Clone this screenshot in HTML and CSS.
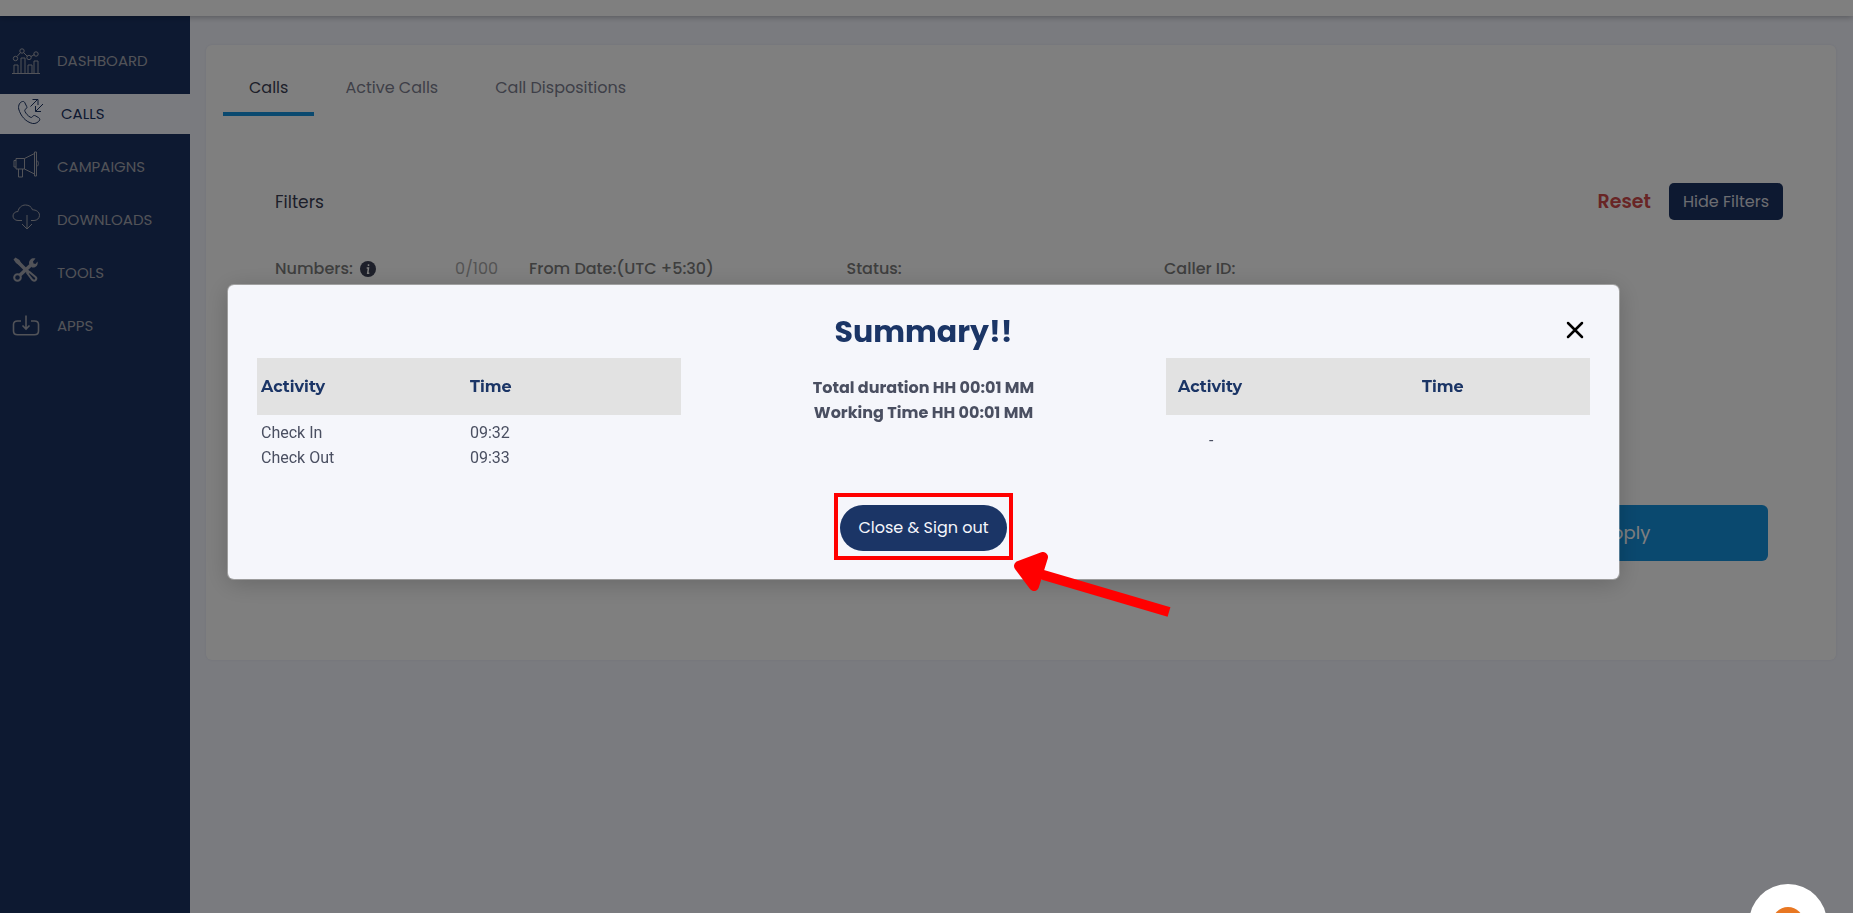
FILE: index.html
```html
<!DOCTYPE html>
<html lang="en">
<head>
    <meta charset="UTF-8">
    <meta name="viewport" content="width=device-width, initial-scale=1.0">
    <title>Calls</title>
    <link rel="stylesheet" href="styles.css">
</head>
<body>
    <header class="topbar"></header>
    <div class="layout">
        <nav class="sidebar">
            <a href="#" class="nav-item">
                <svg class="nav-icon" viewBox="0 0 28 28"><path d="M0 26.500h28M2 26v-8h4v8M9 26V11h4v15M16 26v-8h4v8M22 26V14h4v12M5 9.500l3.500-4M11.500 5.500l4 4M19 9.500l3.500-2"/><circle cx="3.500" cy="11.500" r="2.200"/><circle cx="10" cy="4" r="2.200"/><circle cx="17" cy="10.500" r="2.200"/><circle cx="24" cy="7" r="2.200"/></svg>
                <span>DASHBOARD</span>
            </a>
            <a href="#" class="nav-item active">
                <svg class="nav-icon raised" viewBox="0 0 28 28"><path d="M6.500 4.500C4 5 2 8 2.700 12c2 7 7 13 14 14.500 3 .500 6-1.500 7-3.500.300-1-.200-1.800-1-2.300l-3.500-2c-1-.500-2-.200-2.500.700-.700 1.200-1.500 1.300-2.700.600-2.200-1.300-4-3.300-5-5.500-.500-1.200-.300-1.900.700-2.500 1.200-.700 1.500-1.500 1-2.500l-2-4c-.500-.900-1.200-1.200-2.200-1z"/><path d="M14.500 9.500l7-7M16.500 2.500h5.500v5.500M27 7l-7.500 7.500M19.500 9v5.500H25"/></svg>
                <span>CALLS</span>
            </a>
            <a href="#" class="nav-item">
                <svg class="nav-icon raised" viewBox="0 0 28 28"><path d="M4 8.500h8.500V19H4zM4 10.500H2v6.500h2M12.500 8.500l10-5v20.500l-10-5M22.500 2h2v24h-2zM24.500 10.500c2.500.500 2.500 5.500 0 6M6.500 19v8h4v-8"/></svg>
                <span>CAMPAIGNS</span>
            </a>
            <a href="#" class="nav-item">
                <svg class="nav-icon raised" viewBox="0 0 28 28"><path d="M10 17.500H6c-3 0-5-2-5-4.500S3 8.500 6 8.500C6.500 5 9.500 2 13.500 2c3.500 0 6 1.800 7 4.800 3.500 0 7 2 7 5.500 0 3-2.500 5.200-5.500 5.200h-3M15 12v14M10 21l5 5 5-5"/></svg>
                <span>DOWNLOADS</span>
            </a>
            <a href="#" class="nav-item">
                <svg class="nav-icon raised" viewBox="0 0 28 28"><path class="thick" d="M5 5l14 14M7 20L20 8"/><path class="solid" d="M1.500 3.500l2-2 4 2.500 2 4-1.500 1.500-4-2.500zM17 7.500c0-4 3-6 6.500-5L21 5.500l.500 2 2 .500 2-2.500c1 4-2 6.500-5.500 6z"/><circle class="ring" cx="5.500" cy="21.500" r="3.300"/><path class="ring" d="M15.500 17.500l2-1.500 6 5c2 2-.500 5-3 3z"/></svg>
                <span>TOOLS</span>
            </a>
            <a href="#" class="nav-item">
                <svg class="nav-icon apps" viewBox="0 0 28 28"><path d="M9 9H5.500C3 9 1.500 10.300 1.500 12.500v6.500c0 2.200 1.500 3.700 4 3.700h17c2.500 0 4-1.500 4-3.700v-6.500C26.500 10.300 25 9 22.500 9H19M14 3.500V17M10.500 13.500L14 17l3.500-3.500"/></svg>
                <span>APPS</span>
            </a>
        </nav>

        <main class="content">
            <section class="card">
                <div class="tabs">
                    <a href="#" class="tab selected">Calls</a>
                    <a href="#" class="tab">Active Calls</a>
                    <a href="#" class="tab">Call Dispositions</a>
                </div>
                <form class="filters">
                    <div class="filters-head">
                        <h2>Filters</h2>
                        <button type="reset" class="reset">Reset</button>
                        <button type="button" class="hide-filters">Hide Filters</button>
                    </div>
                    <div class="filter-grid">
                        <div class="field">
                            <div class="label-row">
                                <label for="numbers">Numbers:</label>
                                <svg class="info" viewBox="0 0 16 16"><circle cx="8" cy="8" r="8"/><path d="M8.500 3.200v1.800M6.700 7H8.500L7.700 12.200h1.600"/></svg>
                                <span class="count">0/100</span>
                            </div>
                            <input id="numbers" type="text">
                        </div>
                        <div class="field">
                            <div class="label-row"><label for="from">From Date:(UTC +5:30)</label></div>
                            <input id="from" type="text">
                        </div>
                        <div class="field">
                            <div class="label-row"><label for="status">Status:</label></div>
                            <select id="status"></select>
                        </div>
                        <div class="field">
                            <div class="label-row"><label for="caller">Caller ID:</label></div>
                            <input id="caller" type="text">
                        </div>
                        <button type="button" class="apply">Apply</button>
                    </div>
                </form>
            </section>
        </main>
    </div>

    <div class="overlay">
        <div class="modal" role="dialog" aria-labelledby="summary-title">
            <div class="modal-head">
                <h1 id="summary-title">Summary!!</h1>
                <button class="close" aria-label="Close"><svg viewBox="0 0 18 18"><path d="M2 2l14 14M16 2L2 16"/></svg></button>
            </div>
            <div class="modal-body">
                <table class="log">
                    <thead><tr><th>Activity</th><th>Time</th></tr></thead>
                    <tbody>
                        <tr><td>Check In</td><td>09:32</td></tr>
                        <tr><td>Check Out</td><td>09:33</td></tr>
                    </tbody>
                </table>
                <div class="totals">
                    <p>Total duration HH 00:01 MM</p>
                    <p>Working Time HH 00:01 MM</p>
                </div>
                <table class="log breaks">
                    <thead><tr><th>Activity</th><th>Time</th></tr></thead>
                    <tbody><tr><td>-</td><td></td></tr></tbody>
                </table>
            </div>
            <div class="highlight">
                <button class="sign-out">Close &amp; Sign out</button>
                <svg class="arrow" viewBox="0 0 168 66"><path class="head" d="M9 14L33 5 24 34z"/><path class="shaft" d="M30 22L159 60"/></svg>
            </div>
        </div>
    </div>

    <button class="chat" aria-label="Chat"><span class="chat-dot"></span></button>
</body>
</html>
```

FILE: styles.css
```css
* { margin: 0; padding: 0; box-sizing: border-box; }
body { font-family: Poppins, Inter, sans-serif; font-size: 16px; line-height: 24px; background: #f5f7ff; color: #3b3f54; height: 100vh; overflow: hidden; display: flex; flex-direction: column; }
button, input, select { font: inherit; border: none; cursor: pointer; }
a { text-decoration: none; color: inherit; }
svg { fill: none; stroke: currentColor; }

.topbar { height: 16px; flex-shrink: 0; background: #fff; box-shadow: 0 1px 6px rgba(0, 0, 0, 0.3); position: relative; }
.layout { display: flex; flex: 1; }

/* sidebar */
.sidebar { width: 190px; padding-top: 25px; background: #1b3363; color: #a4a6b0; display: flex; flex-direction: column; gap: 13px; }
.nav-item { display: flex; align-items: center; gap: 17px; height: 40px; padding-left: 12px; font-size: 15px; }
.nav-item.active { background: #f5f7ff; color: #1b3363; padding-left: 16px; }
.nav-icon { width: 28px; height: 28px; stroke-width: 1; }
.nav-icon.raised { margin-bottom: 7px; }
.nav-icon.apps { stroke-width: 1.6; }
.nav-icon .thick { stroke-width: 3.5; }
.nav-icon .solid { fill: currentColor; stroke: none; }
.nav-icon .ring { stroke-width: 2; fill: #1b3363; }

/* calls card */
.content { flex: 1; padding: 29px 17px 0 16px; }
.card { background: #fff; border-radius: 6px; height: 615px; box-shadow: 0 0 3px rgba(60, 60, 120, 0.1); }
.tabs { display: flex; gap: 5px; padding: 14px 17px 0; }
.tab { padding: 17px 26px 12px; color: #7d7f90; border-bottom: 4px solid transparent; }
.tab.selected { color: #3b3f54; border-color: #1592df; }
.filters { padding: 67px 68px 0 69px; }
.filters-head { display: flex; align-items: center; margin-right: -15px; }
.filters-head h2 { font-size: 17px; font-weight: 400; flex: 1; }
.reset { background: none; color: #d04a4a; font-size: 19px; font-weight: 600; padding: 0 18px; }
.hide-filters { height: 37px; padding: 0 14px; border-radius: 5px; background: #1b3363; color: #d8dae0; }
.filter-grid { display: grid; grid-template-columns: 223px repeat(4, 1fr); column-gap: 31px; padding-top: 37px; }
.label-row { display: flex; align-items: center; gap: 7px; height: 24px; font-weight: 500; color: #7d7d7d; }
.info { width: 16px; height: 16px; }
.info circle { fill: #3b3f54; stroke: none; }
.info path { stroke: #fff; stroke-width: 1.5; }
.count { margin-left: auto; font-weight: 400; color: #a8a8a8; }
.field input, .field select { width: 100%; height: 48px; margin-top: 8px; padding: 0 12px; border: 1px solid #ccc; border-radius: 5px; background: #fff; }
.apply { margin-top: 248px; height: 56px; border-radius: 6px; background: #1592df; color: #fff; font-size: 18px; }

/* summary popup */
.overlay { position: fixed; inset: 0; padding: 285px 234px 0 228px; background: rgba(0, 0, 0, 0.5); }
.modal { background: #f5f6fb; border-radius: 6px; padding: 25px 29px 19px; box-shadow: 0 0 0 1px rgba(255, 255, 255, 0.3), 0 4px 24px rgba(0, 0, 0, 0.2); }
.modal-head { display: grid; grid-template-columns: 1fr auto 1fr; align-items: center; height: 48px; padding-bottom: 5px; }
.modal-head h1 { grid-column: 2; font-size: 30px; line-height: 43px; color: #1b3566; }
.close { justify-self: end; width: 18px; height: 18px; margin: 0 6px 4px 0; background: none; color: #000; }
.close svg { display: block; stroke-width: 2.5; stroke-linecap: round; }
.modal-body { display: grid; grid-template-columns: 424px 1fr 424px; align-items: start; min-height: 135px; }
.log { width: 100%; border-collapse: collapse; table-layout: fixed; text-align: left; color: #4a4f61; }
.log th { height: 57px; padding-left: 4px; background: #e2e2e2; color: #1b3566; font-family: Montserrat, Poppins, sans-serif; font-weight: 700; }
.log th:first-child { width: 209px; }
.log td { padding-left: 4px; font-family: Roboto, sans-serif; line-height: 25px; }
.log tbody tr:first-child td { padding-top: 5px; }
.breaks th { padding-left: 12px; }
.breaks th:first-child { width: 244px; }
.breaks tbody tr:first-child td { padding: 13px 0 0 43px; }
.totals { padding-top: 17px; text-align: center; font-weight: 700; line-height: 25px; color: #4a4f61; }

.highlight { position: relative; width: fit-content; margin: 0 auto; padding: 8px 2px 5px; border: 4px solid #f00; }
.sign-out { display: block; height: 46px; padding: 0 18px; border-radius: 23px; background: #1b3566; color: #f5f6fb; }
.arrow { position: absolute; left: 172px; top: 55px; width: 168px; height: 66px; stroke: #f00; }
.arrow .head { fill: #f00; stroke-width: 10; stroke-linejoin: round; }
.arrow .shaft { stroke-width: 10; }

.chat { position: fixed; right: 26px; bottom: -49px; width: 78px; height: 78px; border-radius: 50%; background: #fff; display: flex; align-items: center; justify-content: center; }
.chat-dot { width: 32px; height: 32px; border-radius: 50%; background: #e87722; }
```
